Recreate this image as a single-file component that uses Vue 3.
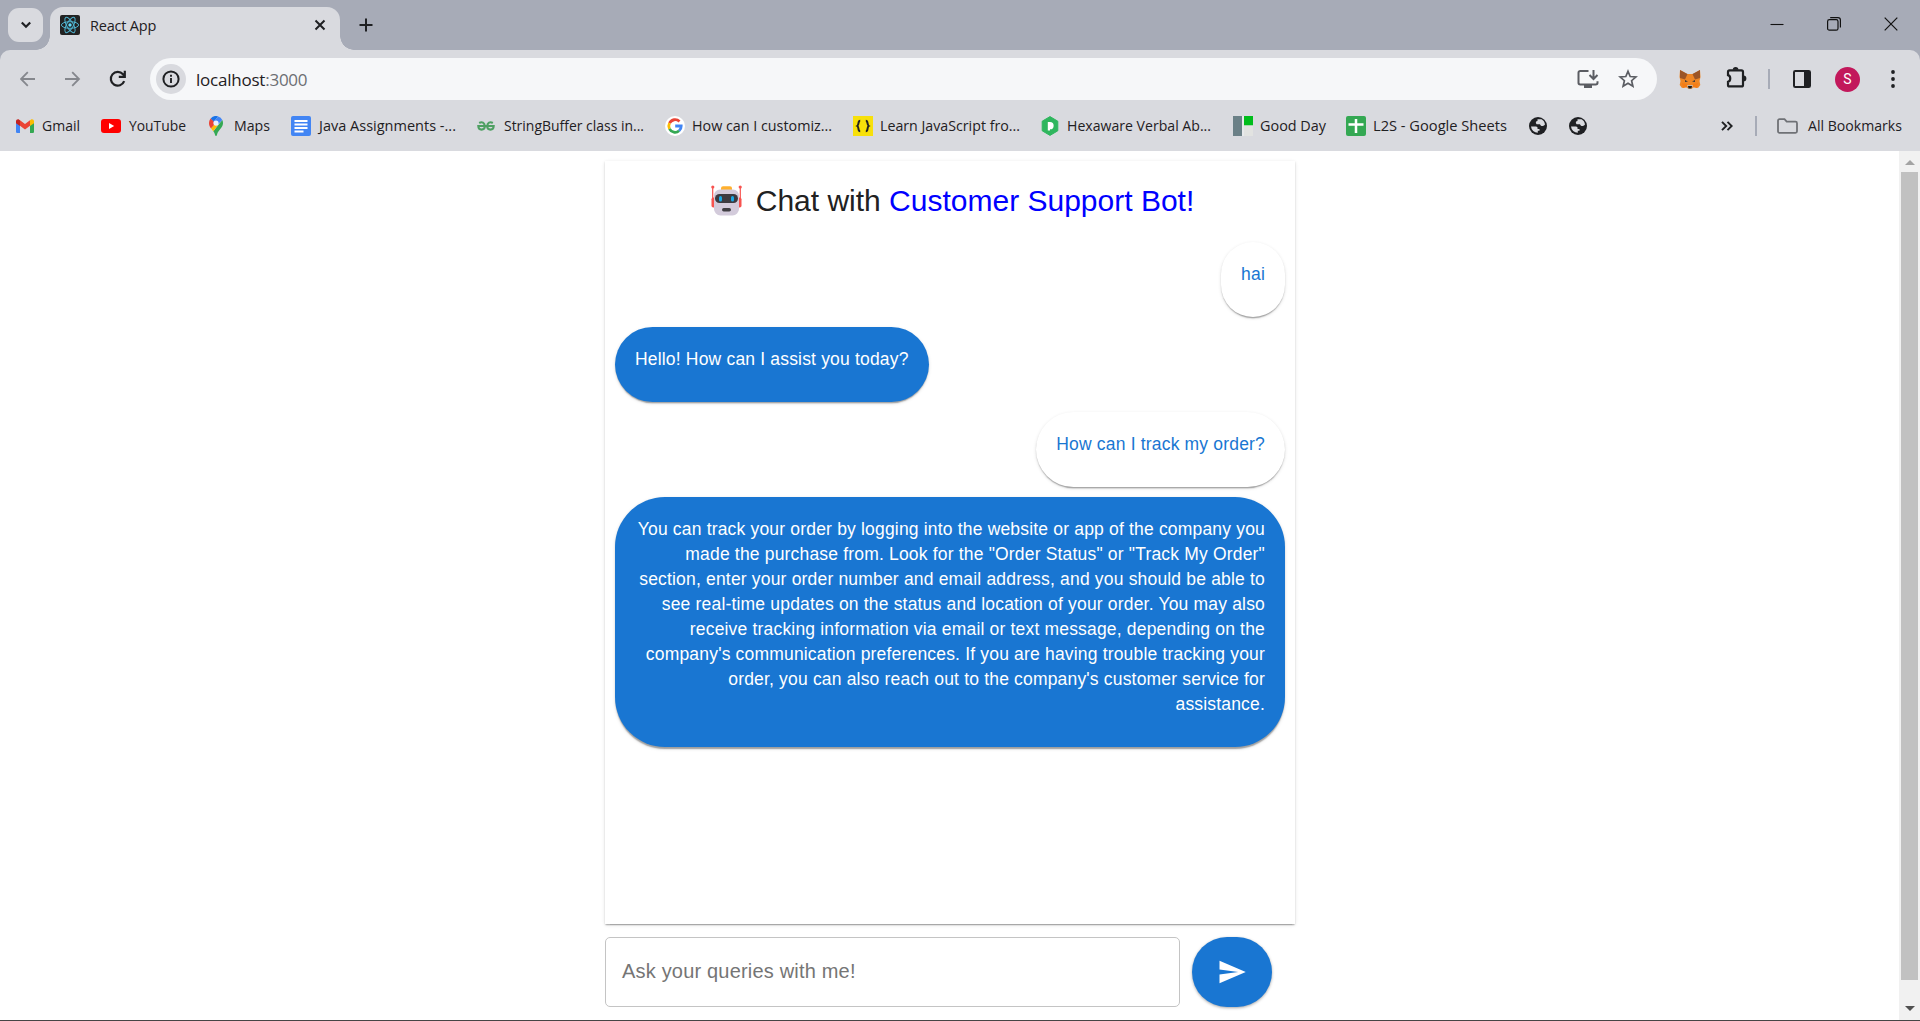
<script setup>
const bookmarks = [
  { icon: 'gmail', label: 'Gmail', x: 16, iw: 18, gap: 8, tw: 38 },
  { icon: 'youtube', label: 'YouTube', x: 101, iw: 20, gap: 8, tw: 57 },
  { icon: 'maps', label: 'Maps', x: 206, iw: 20, gap: 8, tw: 36 },
  { icon: 'docs', label: 'Java Assignments -...', x: 291, iw: 20, gap: 8, tw: 137 },
  { icon: 'gfg', label: 'StringBuffer class in...', x: 476, iw: 20, gap: 8, tw: 140 },
  { icon: 'google', label: 'How can I customiz...', x: 665, iw: 20, gap: 7, tw: 140 },
  { icon: 'js', label: 'Learn JavaScript fro...', x: 853, iw: 20, gap: 7, tw: 140 },
  { icon: 'prep', label: 'Hexaware Verbal Ab...', x: 1040, iw: 20, gap: 7, tw: 144 },
  { icon: 'good', label: 'Good Day', x: 1233, iw: 20, gap: 7, tw: 66 },
  { icon: 'sheets', label: 'L2S - Google Sheets', x: 1346, iw: 20, gap: 7, tw: 134 },
  { icon: 'globe', label: '', x: 1528, iw: 20, gap: 0, tw: 0 },
  { icon: 'globe', label: '', x: 1568, iw: 20, gap: 0, tw: 0 }
].map((b, i, all) => {
  const prev = all[i - 1]
  return { ...b, lead: prev ? b.x - (prev.x + prev.iw + prev.gap + prev.tw) : b.x }
})

const messages = [
  { from: 'user', text: 'hai' },
  { from: 'bot', text: 'Hello! How can I assist you today?' },
  { from: 'user', text: 'How can I track my order?' },
  {
    from: 'bot',
    text: 'You can track your order by logging into the website or app of the company you made the purchase from. Look for the "Order Status" or "Track My Order" section, enter your order number and email address, and you should be able to see real-time updates on the status and location of your order. You may also receive tracking information via email or text message, depending on the company\'s communication preferences. If you are having trouble tracking your order, you can also reach out to the company\'s customer service for assistance.'
  }
]
</script>

<template>
  <div class="window">
    <header class="tabs">
      <div class="tab-search">
        <svg width="12" height="8" viewBox="0 0 12 8"><path d="M1.8 1.5 6 5.7l4.2-4.2" fill="none" stroke="#1f2023" stroke-width="2.2" /></svg>
      </div>
      <div class="tab">
        <svg width="20" height="20" viewBox="0 0 20 20">
          <rect width="20" height="20" rx="2" fill="#222" />
          <g fill="none" stroke="#4fb3cf" stroke-width="1">
            <ellipse cx="10" cy="10" rx="8.6" ry="3.3" />
            <ellipse cx="10" cy="10" rx="8.6" ry="3.3" transform="rotate(60 10 10)" />
            <ellipse cx="10" cy="10" rx="8.6" ry="3.3" transform="rotate(120 10 10)" />
          </g>
          <circle cx="10" cy="10" r="1.7" fill="#61dafb" />
        </svg>
        <span class="tab-title">React App</span>
        <svg class="tab-close" width="12" height="12" viewBox="0 0 12 12"><path d="m1.5 1.5 9 9m0-9-9 9" stroke="#1f2023" stroke-width="2" /></svg>
      </div>
      <svg class="new-tab" width="14" height="14" viewBox="0 0 14 14"><path d="M7 .5v13M.5 7h13" stroke="#1f2023" stroke-width="2" /></svg>
      <div class="controls">
        <svg width="14" height="14" viewBox="0 0 14 14"><path d="M.5 7.5h13" stroke="#111" stroke-width="1.1" /></svg>
        <svg width="14" height="14" viewBox="0 0 14 14"><rect x=".6" y="2.6" width="10.4" height="10.6" rx="1.8" fill="none" stroke="#111" stroke-width="1.2" /><path d="M3.2.6H11a2.4 2.4 0 0 1 2.4 2.4v7.6" fill="none" stroke="#111" stroke-width="1.2" /></svg>
        <svg width="14" height="14" viewBox="0 0 14 14"><path d="m.7.7 12.6 12.6m0-12.6L.7 13.3" stroke="#111" stroke-width="1.2" /></svg>
      </div>
    </header>

    <div class="toolbar">
      <svg class="back" width="16" height="16" viewBox="0 0 16 16"><path d="M15 8H1.300M7.800 1.200 1 8l6.800 6.800" fill="none" stroke="#85878d" stroke-width="1.8" /></svg>
      <svg class="forward" width="16" height="16" viewBox="0 0 16 16"><path d="M0 8h13.700M7.200 1.200 14 8l-6.800 6.800" fill="none" stroke="#85878d" stroke-width="1.8" /></svg>
      <svg class="reload" width="18" height="18" viewBox="0 0 18 18"><path d="M15.2 11.2A6.9 6.9 0 1 1 14 4.300l1.600 1.800M15.800.8v6h-6" fill="none" stroke="#1f2023" stroke-width="2.2" /></svg>
      <div class="address">
        <div class="info">
          <svg width="18" height="18" viewBox="0 0 18 18"><circle cx="9" cy="9" r="7.6" fill="none" stroke="#1f2023" stroke-width="2" /><path d="M9 8v5M9 4.8v2" stroke="#1f2023" stroke-width="1.9" /></svg>
        </div>
        <span class="url">localhost<i>:3000</i></span>
        <svg class="install" width="22" height="20" viewBox="0 0 22 20"><path d="M11.5 2H3.2A1.7 1.7 0 0 0 1.500 3.700v10A1.700 1.700 0 0 0 3.200 15.400h15.600a1.700 1.700 0 0 0 1.700-1.700v-1.500" fill="none" stroke="#5b5d63" stroke-width="2" /><path d="M7 16h8v3H7z" fill="#5b5d63" /><path d="M16.500 1v9m-4-4 4 4 4-4" fill="none" stroke="#5b5d63" stroke-width="2" /></svg>
        <svg class="star" width="20" height="20" viewBox="0 0 20 20"><path d="m10 2.300 2.200 5.200 5.700.5-4.300 3.700 1.300 5.600-4.900-3-4.900 3 1.300-5.600L2.100 8l5.700-.5z" fill="none" stroke="#5b5d63" stroke-width="1.700" /></svg>
      </div>
      <svg class="fox" width="22" height="20" viewBox="0 0 22 20">
        <path d="m1 1 7 4h6l7-4 .5 7-1 4 .8 4-2.300 3-4-1-2 1.500H9L7 18l-4 1-2.300-3 .8-4-1-4z" fill="#ee8625" />
        <path d="m1 1 7.500 4L6 10.500 1 9zM21 1l-7.500 4 2.500 5.500L21 9z" fill="#9c5526" />
        <path d="m3 14 5 1 1 3-5 1zm16 0-5 1-1 3 5 1z" fill="#f57c14" />
        <path d="m6 11 3 1.500L6 13zm10 0-3 1.500 3 .5z" fill="#33343a" />
        <path d="M8 16h6l-1 3H9z" fill="#c9b8a8" /><path d="M9 17h4l-.5 2.500h-3z" fill="#1f1a17" />
      </svg>
      <svg class="puzzle" width="21" height="21" viewBox="0 0 21 21"><path d="M3.500 3.400h12a1.500 1.500 0 0 1 1.500 1.500v13a1.500 1.500 0 0 1-1.500 1.500h-12A1.500 1.500 0 0 1 2 17.900v-3c3-.9 3-5.900 0-6.800V4.900a1.500 1.500 0 0 1 1.500-1.500z" fill="none" stroke="#1f2023" stroke-width="2.200" /><path d="M6.800 2.800a2.800 2.800 0 0 1 5.600 0zM17.500 8.500a2.900 2.900 0 0 1 0 5.800z" fill="#1f2023" /></svg>
      <i class="divider"></i>
      <svg class="panel" width="18" height="18" viewBox="0 0 18 18"><rect x="1" y="1" width="16" height="16" rx="1.300" fill="none" stroke="#1f2023" stroke-width="2" /><path d="M11 1h6v16h-6z" fill="#1f2023" /></svg>
      <div class="avatar">S</div>
      <svg class="menu" width="4" height="18" viewBox="0 0 4 18" fill="#1f2023"><circle cx="2" cy="2" r="1.900" /><circle cx="2" cy="9" r="1.900" /><circle cx="2" cy="16" r="1.900" /></svg>
    </div>

    <nav class="bookmarks">
      <div v-for="(b, i) in bookmarks" :key="i" class="bookmark" :style="{ marginLeft: b.lead + 'px' }">
        <svg v-if="b.icon === 'gmail'" width="18" height="20" viewBox="0 0 18 20"><path d="M0 5v10.500A1.300 1.300 0 0 0 1.300 17H4V8z" fill="#4285f4" /><path d="M18 5v10.500a1.300 1.300 0 0 1-1.300 1.500H14V8z" fill="#34a853" /><path d="M4 4.300v5.400l5 3.800 5-3.800V4.300L9 8z" fill="#ea4335" /><path d="M0 5.200v2L4 10V4.300l-.8-.6C1.900 2.700 0 3.600 0 5.200z" fill="#c5221f" /><path d="M18 5.200v2L14 10V4.300l.8-.6c1.300-1 3.200-.1 3.200 1.500z" fill="#fbbc04" /></svg>
        <svg v-else-if="b.icon === 'youtube'" width="20" height="20" viewBox="0 0 20 20"><rect y="3" width="20" height="14" rx="3" fill="#f00" /><path d="m8 7 5.200 3L8 13z" fill="#fff" /></svg>
        <svg v-else-if="b.icon === 'maps'" width="20" height="20" viewBox="0 0 20 20">
          <path d="M4.700 2.400 10 7 5 12.500C3.800 11 3 9.200 3 7.200c0-2 .7-3.600 1.700-4.800z" fill="#ea4335" /><path d="M4.700 2.400A7 7 0 0 1 12.200.4L7.800 5.500z" fill="#1a73e8" /><path d="M12.200.4a7 7 0 0 1 4.100 3.500L10 10.500 7.500 5.800z" fill="#4285f4" /><path d="M16.300 3.900c1.200 2.600.8 5.200-.7 7.300-2.500 3.600-4 4.500-4.600 7.600-.3 1.600-1.700 1.600-2 0-.3-1.500-.9-2.600-1.700-3.600z" fill="#34a853" /><path d="m12.200 8.700-4.900 6.500-2.300-2.700 5-5.500z" fill="#fbbc04" /><circle cx="10" cy="7.100" r="2.600" fill="#e8f0fe" />
        </svg>
        <svg v-else-if="b.icon === 'docs'" width="20" height="20" viewBox="0 0 20 20"><rect width="20" height="20" rx="2" fill="#4285f4" /><path d="M3.500 5h13M3.500 8.500h13M3.500 12h13M3.500 15.500h9" stroke="#fff" stroke-width="1.800" /></svg>
        <svg v-else-if="b.icon === 'gfg'" width="20" height="20" viewBox="0 0 20 20"><path d="M3.200 7C6 5.200 8.700 6.800 8.700 10H2.300c.2 5 6.400 4.600 6.600 0M16.800 7C14 5.200 11.300 6.800 11.300 10h6.400c-.2 5-6.400 4.600-6.600 0M8.500 10h3" fill="none" stroke="#4fa063" stroke-width="2.100" /></svg>
        <svg v-else-if="b.icon === 'google'" width="20" height="20" viewBox="0 0 20 20"><circle cx="10" cy="10" r="10" fill="#fff" /><g fill="none" stroke-width="2.800"><path d="M14.500 5.500A6.200 6.200 0 0 0 4.500 7.200" stroke="#ea4335" /><path d="M4.500 7.200a6.200 6.200 0 0 0 0 5.700" stroke="#fbbc04" /><path d="M4.500 12.900a6.200 6.200 0 0 0 9.600 1.900" stroke="#34a853" /><path d="M14.100 14.800A6.200 6.200 0 0 0 16.200 10H10.200" stroke="#4285f4" /></g></svg>
        <svg v-else-if="b.icon === 'js'" width="20" height="20" viewBox="0 0 20 20"><path d="M0 0h20v20H0z" fill="#f7e00a" /><path d="M7.200 4.800c-2.600 0-.9 4-2.900 5.200 2 1.200.3 5.200 2.900 5.200M12.800 4.800c2.600 0 .9 4 2.900 5.200-2 1.200-.3 5.200-2.900 5.200" fill="none" stroke="#222" stroke-width="2" /></svg>
        <svg v-else-if="b.icon === 'prep'" width="20" height="20" viewBox="0 0 20 20"><path d="m10 .6 7.800 4.600v9.600L10 19.400l-7.800-4.600V5.200z" fill="#2fb65e" stroke="#2fb65e" stroke-linejoin="round" /><path d="M7.800 6H10a3.500 3.500 0 0 1 0 7.300v1.200H7.800z" fill="#fff" /></svg>
        <svg v-else-if="b.icon === 'good'" width="20" height="20" viewBox="0 0 20 20"><path d="M0 0h9v20H0z" fill="#6b8087" /><path d="M9 0h2v20H9z" fill="#e8eaec" /><path d="M11 0h9v9.500h-9z" fill="#00bd1b" /><path d="M11 9.500h9V20h-9z" fill="#e2e3e1" /></svg>
        <svg v-else-if="b.icon === 'sheets'" width="20" height="20" viewBox="0 0 20 20"><rect width="20" height="20" rx="2" fill="#34a853" /><path d="M10 3v14M2.500 8.500h15" stroke="#fff" stroke-width="2.500" /></svg>
        <svg v-else width="20" height="20" viewBox="0 0 20 20"><circle cx="10" cy="10" r="9" fill="#1f2023" /><path d="M3 10.500h4.800c1.700 0 2 1.200 1.700 2.500h2v1.700H9.800v2.100A6.900 6.900 0 0 1 3 10.500zM9.500 3.200h4c1.900 1 3.200 2.900 3.500 5.200-1.800 2.200-4.300 2.300-5-.1H8.600c-1.500-1.700-.6-3 .9-3.200z" fill="#d9dadf" /></svg>
        <svg v-if="b.label" class="label" :width="b.tw" height="24" :style="{ marginLeft: b.gap + 'px' }"><text x="0" y="17" :textLength="b.tw" lengthAdjust="spacingAndGlyphs">{{ b.label }}</text></svg>
      </div>
      <div class="more">
        <svg width="12" height="10" viewBox="0 0 12 10"><path d="m1 .8 4.200 4.200L1 9.200M6.500.8 10.700 5 6.500 9.200" fill="none" stroke="#1f2023" stroke-width="1.900" /></svg>
        <i class="divider"></i>
        <svg class="folder" width="21" height="16" viewBox="0 0 21 16"><path d="M1 13.300V2.700A1.500 1.500 0 0 1 2.500 1.200h5L9.700 3.700h8.800A1.500 1.500 0 0 1 20 5.200v8.100a1.500 1.500 0 0 1-1.500 1.500h-16A1.500 1.500 0 0 1 1 13.300z" fill="none" stroke="#6f7176" stroke-width="1.800" /></svg>
        <svg class="label" width="94" height="24"><text x="0" y="17" textLength="94" lengthAdjust="spacingAndGlyphs">All Bookmarks</text></svg>
      </div>
    </nav>

    <main class="viewport">
      <div class="page">
        <section class="card">
          <h5 class="heading">
            <svg class="robot" width="31" height="31" viewBox="0 0 31 31">
              <path d="M1.700 2v20M29.300 2v20" stroke="#f8534f" stroke-width="1.200" />
              <circle cx="1.800" cy="2" r="1.600" fill="#f8534f" /><circle cx="29.200" cy="2" r="1.600" fill="#f8534f" />
              <rect x=".5" y="12.500" width="4" height="10" rx="1.800" fill="#f8534f" /><rect x="26.500" y="12.500" width="4" height="10" rx="1.800" fill="#f8534f" />
              <rect x="10" y="1.300" width="11" height="5" rx="2" fill="#ffb02e" />
              <path d="M9 4.500h13a6 6 0 0 1 6 6v13.500a6.500 6.500 0 0 1-6.500 6.500h-12A6.500 6.500 0 0 1 3 24V10.500a6 6 0 0 1 6-6z" fill="#d3cbdb" />
              <rect x="4" y="9" width="23" height="9" rx="4.500" fill="#3d3b40" />
              <rect x="8" y="11" width="3" height="5.500" rx="1.500" fill="#19a9e5" /><rect x="20" y="11" width="3" height="5.500" rx="1.500" fill="#19a9e5" />
              <rect x="11" y="23" width="9" height="3.500" rx="1.700" fill="#403e43" />
            </svg>
            <span>Chat with <b>Customer Support Bot!</b></span>
          </h5>
          <div v-for="(m, i) in messages" :key="i" class="message" :class="m.from">{{ m.text }}</div>
        </section>
        <form class="ask">
          <div class="field">Ask your queries with me!</div>
          <div class="send">
            <svg width="30" height="30" viewBox="0 0 24 24"><path d="M2.010 21 23 12 2.010 3 2 10l15 2-15 2z" fill="#fff" /></svg>
          </div>
        </form>
      </div>
      <aside class="scrollbar">
        <i class="up"></i>
        <div class="thumb"></div>
        <i class="down"></i>
      </aside>
    </main>
  </div>
</template>

<style>
body { overflow: hidden; }
</style>

<style scoped>
.window { box-sizing: border-box; width: 1920px; height: 1021px; display: flex; flex-direction: column; background: #a7abb7; border-bottom: 1px solid #454545; font-family: "Open Sans", "Noto Sans", sans-serif; color: #1f2023; }
svg { display: block; flex: none; }
.tabs { height: 50px; flex: none; display: flex; }
.tab-search { width: 35px; height: 34px; margin: 8px 0 0 8px; border-radius: 11px; background: #d9dadf; display: flex; align-items: center; justify-content: center; }
.tab { position: relative; box-sizing: border-box; width: 290px; height: 43px; margin: 7px 0 0 7px; padding: 0 14px 7px 10px; display: flex; align-items: center; border-radius: 13px 13px 0 0; background: #d9dadf; }
.tab::before, .tab::after { content: ""; position: absolute; bottom: 0; width: 14px; height: 14px; }
.tab::before { left: -14px; background: radial-gradient(circle at 0 0, transparent 13.500px, #d9dadf 14px); }
.tab::after { right: -14px; background: radial-gradient(circle at 100% 0, transparent 13.500px, #d9dadf 14px); }
.tab-title { margin-left: 10px; font-size: 14.500px; letter-spacing: -0.200px; }
.tab-close { margin-left: auto; }
.new-tab { margin: 18px 0 0 19px; }
.controls { margin: 17px 22px 0 auto; display: flex; gap: 43px; }
.toolbar { box-sizing: border-box; height: 58px; flex: none; padding: 0 20px; display: flex; align-items: center; background: #d9dadf; border-radius: 10px 10px 0 0; }
.forward { margin-left: 29px; }
.reload { margin-left: 28px; }
.address { box-sizing: border-box; width: 1507px; height: 42px; margin-left: 23px; padding: 0 19px 0 6px; border-radius: 21px; background: #f6f7f9; display: flex; align-items: center; }
.info { width: 30px; height: 30px; border-radius: 50%; background: #d9dadf; display: flex; align-items: center; justify-content: center; }
.url { margin-left: 10px; font-size: 17px; letter-spacing: -0.230px; }
.url i { font-style: normal; color: #6c6e73; }
.install { margin-left: auto; }
.star { margin-left: 19px; }
.fox { margin-left: 22px; }
.puzzle { margin: -3px 0 0 25px; }
.divider { width: 2px; height: 20px; background: #a7abb7; }
.toolbar .divider { margin-left: 21px; }
.panel { margin-left: 23px; }
.avatar { width: 25px; height: 25px; margin-left: 24px; border-radius: 50%; background: #c2185b; color: #fff; display: flex; align-items: center; justify-content: center; font: 14px Roboto, sans-serif; }
.menu { margin-left: 31px; }
.bookmarks { box-sizing: border-box; height: 43px; flex: none; display: flex; align-items: flex-start; padding-top: 6px; background: #d9dadf; }
.bookmark, .more { height: 24px; display: flex; align-items: center; }
.label { overflow: visible; }
.label text { font-size: 14.500px; fill: #1f2023; }
.more { margin-left: auto; padding-right: 18px; }
.more .divider { margin-left: 22px; }
.folder { margin: 0 10px 0 20px; }
.viewport { flex: 1; min-height: 0; display: flex; justify-content: space-between; background: #fff; font-family: "Liberation Sans", Arial, sans-serif; }
.page { width: 690px; margin-left: 605px; padding-top: 10px; }
.card, .message { box-shadow: 0 2.500px 1.250px -1.250px rgba(0, 0, 0, .2), 0 1.250px 1.250px rgba(0, 0, 0, .14), 0 1.250px 3.750px rgba(0, 0, 0, .12); }
.card { box-sizing: border-box; height: 763px; padding: 20px 10px; display: flex; flex-direction: column; align-items: flex-start; overflow: hidden; }
.heading { box-sizing: border-box; width: 100%; height: 40px; margin: 0 0 21px; padding-left: 5px; display: flex; align-items: center; justify-content: center; gap: 14px; font-size: 30px; font-weight: 400; line-height: 40px; color: #212121; }
.heading b { font-weight: 400; color: #00f; }
.robot { margin-bottom: 2px; }
.message { box-sizing: border-box; margin-bottom: 10px; padding: 20px 20px 30px; border-radius: 50px; font-size: 17.500px; line-height: 25px; letter-spacing: .180px; text-align: right; }
.user { align-self: flex-end; background: #fff; color: #1976d2; }
.bot { background: #1976d2; color: #fff; }
.ask { display: flex; margin-top: 13px; gap: 12px; }
.field { box-sizing: border-box; width: 575px; height: 70px; padding: 0 16px 2px; display: flex; align-items: center; border: 1px solid #c4c4c4; border-radius: 5px; font-size: 20px; letter-spacing: .188px; color: #757575; }
.send { width: 80px; height: 70px; border-radius: 50px; display: flex; align-items: center; justify-content: center; background: #1976d2; box-shadow: 0 1px 3px rgba(0, 0, 0, .35); }
.scrollbar { width: 21px; display: flex; flex-direction: column; align-items: center; background: #f1f1f1; }
.up { margin-top: 9px; border: 5px solid transparent; border-top: 0; border-bottom-color: #a3a3a3; }
.thumb { width: 17px; height: 808px; margin-top: 7px; background: #c1c1c1; }
.down { margin-top: 26px; border: 5px solid transparent; border-bottom: 0; border-top-color: #505050; }
</style>
